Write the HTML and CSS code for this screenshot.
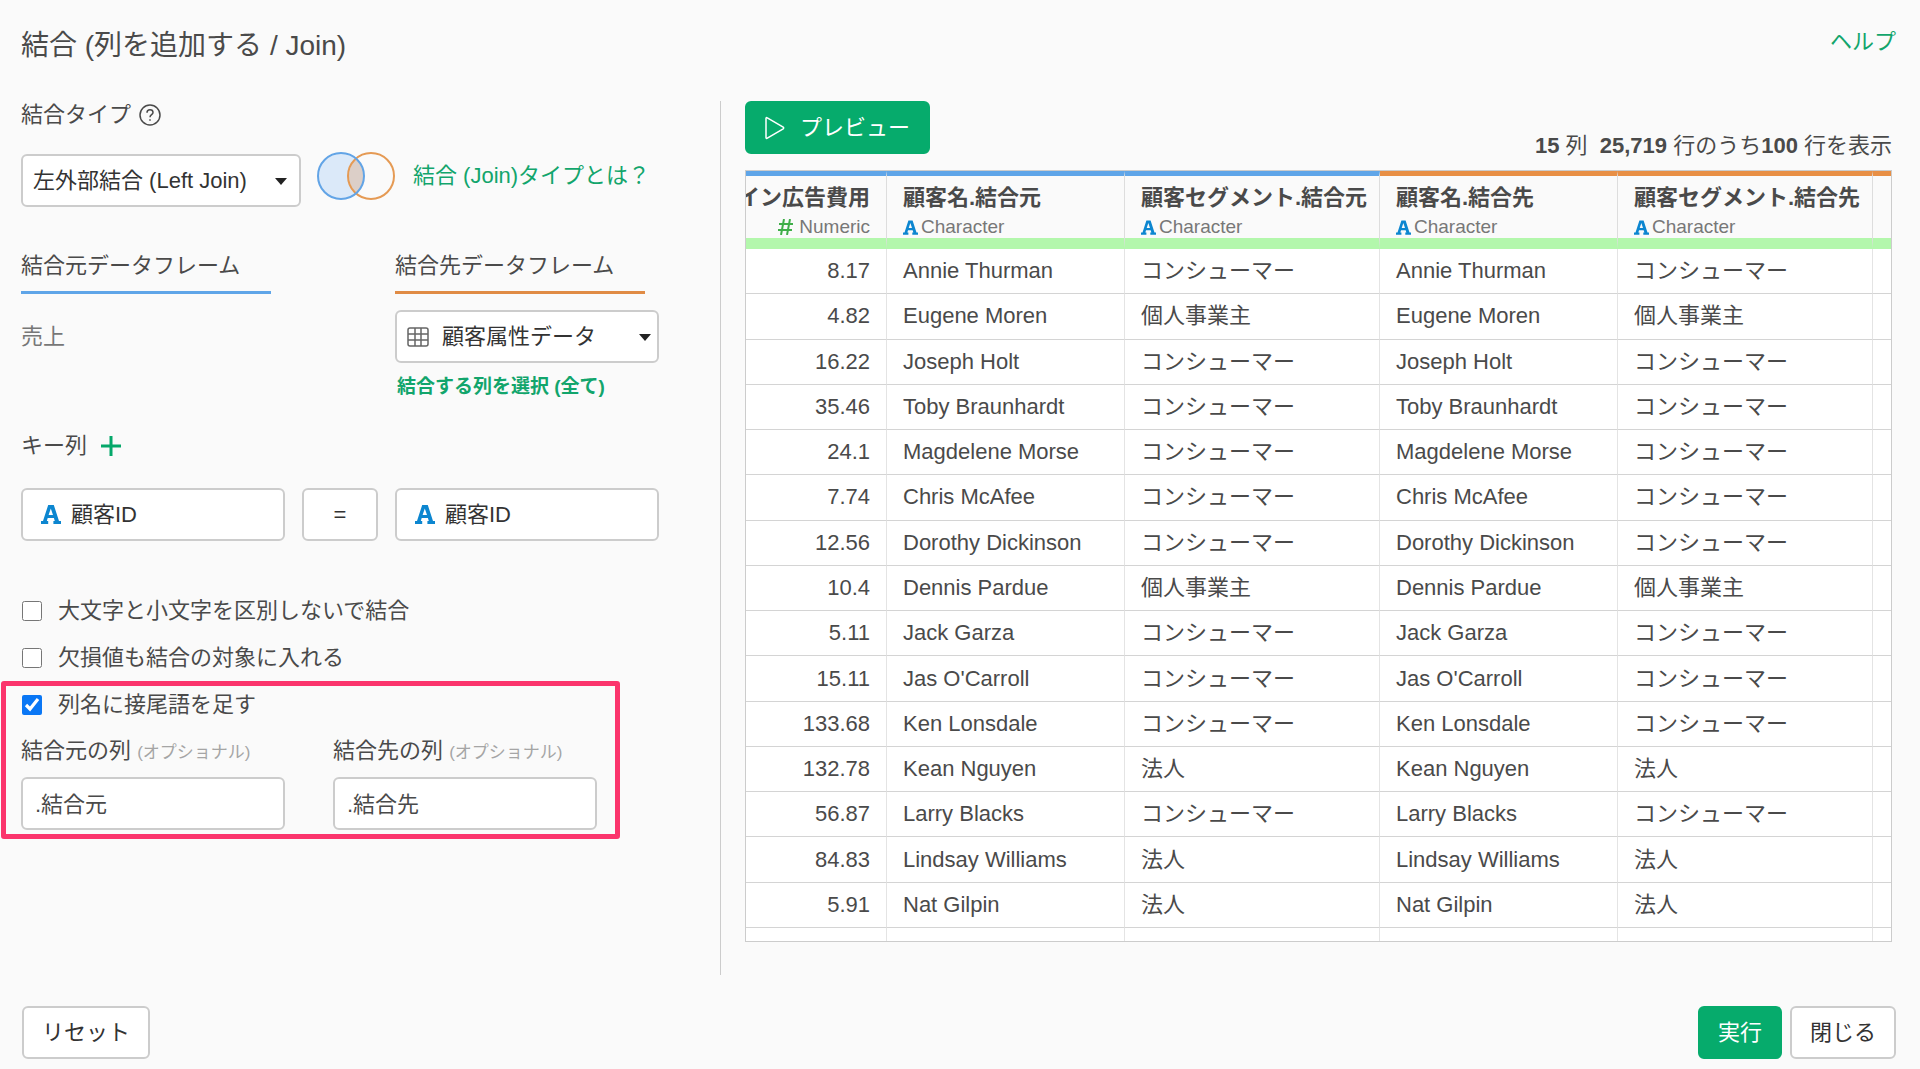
FILE: index.html
```
<!DOCTYPE html>
<html lang="ja">
<head>
    <meta charset="UTF-8">
    <meta name="viewport" content="width=device-width, initial-scale=1.0">
    <title>結合 (列を追加する / Join)</title>
    <link rel="stylesheet" href="styles.css">
</head>
<body>
    <!-- Shared icons -->
    <svg class="sprite" aria-hidden="true">
        <symbol id="icon-char" viewBox="0 0 20 19">
            <path fill-rule="evenodd" d="M7.200 0h5.600l5.200 16H20v3h-7.600v-3h1.400l-.9-3H6.700l-.9 3h1.400v3H0v-3h2zM9.800 3.600L7.600 10h4.400z"/>
        </symbol>
    </svg>

    <header class="header">
        <h1>結合 (列を追加する / Join)</h1>
        <a class="help-link" href="#">ヘルプ</a>
    </header>

    <main class="workspace">
        <!-- Join settings -->
        <form class="settings" id="joinForm">
            <div class="label-row">
                <label for="joinType">結合タイプ</label>
                <svg class="icon-help" viewBox="0 0 22 22" aria-hidden="true">
                    <circle cx="11" cy="11" r="10"/>
                    <path d="M8 8.700C8 6.700 9.300 5.700 11 5.700s3 1 3 2.700c0 2.200-3 2.400-3 4.800M11 15.200v1.600"/>
                </svg>
            </div>
            <div class="join-type">
                <div class="select join-select">
                    <select id="joinType">
                        <option>左外部結合 (Left Join)</option>
                    </select>
                </div>
                <div class="join-info">
                    <svg class="venn" viewBox="0 0 78 48" aria-hidden="true">
                        <circle cx="24" cy="24" r="23" fill="#dbe9f9"/>
                        <path d="M39.500 6.900a23 23 0 0 1 0 34.200a23 23 0 0 1 0-34.200z" fill="#dccfc8"/>
                        <circle cx="54" cy="24" r="23" fill="none" stroke="#e59a54" stroke-width="2"/>
                        <circle cx="24" cy="24" r="23" fill="none" stroke="#62a4e6" stroke-width="2"/>
                    </svg>
                    <a href="#">結合 (Join)タイプとは？</a>
                </div>
            </div>

            <div class="frames">
                <div class="frame-title source">結合元データフレーム</div>
                <label class="frame-title target" for="targetFrame">結合先データフレーム</label>
                <div class="source-name">売上</div>
                <div>
                    <div class="select frame-select">
                        <svg class="icon-table" viewBox="0 0 22 20" aria-hidden="true">
                            <rect x="1" y="1" width="20" height="18" rx="2"/>
                            <path d="M1 7h20M1 13h20M8 1v18M14 1v18"/>
                        </svg>
                        <select id="targetFrame">
                            <option>顧客属性データ</option>
                        </select>
                    </div>
                    <a class="column-link" href="#">結合する列を選択 (全て)</a>
                </div>
            </div>

            <div class="label-row key-label">
                <span>キー列</span>
                <button class="add-key" type="button" aria-label="キー列を追加">
                    <svg viewBox="0 0 20 20" aria-hidden="true"><path d="M10 0v20M0 10h20"/></svg>
                </button>
            </div>
            <div class="keys">
                <button class="key" type="button"><svg class="icon-char" aria-hidden="true"><use href="#icon-char"/></svg>顧客ID</button>
                <button class="key operator" type="button">=</button>
                <button class="key" type="button"><svg class="icon-char" aria-hidden="true"><use href="#icon-char"/></svg>顧客ID</button>
            </div>

            <div class="options">
                <label class="check"><input type="checkbox">大文字と小文字を区別しないで結合</label>
                <label class="check"><input type="checkbox">欠損値も結合の対象に入れる</label>
            </div>

            <div class="suffix-box">
                <label class="check"><input type="checkbox" checked>列名に接尾語を足す</label>
                <div class="suffixes">
                    <div class="suffix">
                        <label for="sourceSuffix">結合元の列 <small>(オプショナル)</small></label>
                        <input type="text" id="sourceSuffix" value=".結合元">
                    </div>
                    <div class="suffix">
                        <label for="targetSuffix">結合先の列 <small>(オプショナル)</small></label>
                        <input type="text" id="targetSuffix" value=".結合先">
                    </div>
                </div>
            </div>
        </form>

        <!-- Preview -->
        <section class="preview">
            <div class="toolbar">
                <button class="btn primary preview-btn" type="button">
                    <svg viewBox="0 0 20 24" aria-hidden="true"><path d="M1 2.500v19c0 .8.700 1.100 1.300.7l15.900-9.400c.6-.4.6-1.200 0-1.600L2.300 1.800C1.700 1.400 1 1.700 1 2.500z"/></svg>
                    プレビュー
                </button>
                <div class="stats"><b>15</b> 列 &nbsp;<b>25,719</b> 行のうち<b>100</b> 行を表示</div>
            </div>
            <div class="table-wrap">
                <table>
                    <colgroup>
                        <col class="col-number">
                        <col class="col-name">
                        <col class="col-segment">
                        <col class="col-name">
                        <col class="col-segment">
                        <col>
                    </colgroup>
                    <thead>
                        <tr>
                            <th class="num"><div class="name">イン広告費用</div><div class="type"><svg class="icon-num" viewBox="0 0 15 16" aria-hidden="true"><path d="M6 0L3 16M12 0L9 16M1 5h14M0 11h14"/></svg>Numeric</div></th>
                            <th><div class="name">顧客名.結合元</div><div class="type"><svg class="icon-char" aria-hidden="true"><use href="#icon-char"/></svg>Character</div></th>
                            <th><div class="name">顧客セグメント.結合元</div><div class="type"><svg class="icon-char" aria-hidden="true"><use href="#icon-char"/></svg>Character</div></th>
                            <th class="joined"><div class="name">顧客名.結合先</div><div class="type"><svg class="icon-char" aria-hidden="true"><use href="#icon-char"/></svg>Character</div></th>
                            <th class="joined"><div class="name">顧客セグメント.結合先</div><div class="type"><svg class="icon-char" aria-hidden="true"><use href="#icon-char"/></svg>Character</div></th>
                            <th class="joined"></th>
                        </tr>
                    </thead>
                    <tbody>
                        <tr><td class="num">8.17</td><td>Annie Thurman</td><td>コンシューマー</td><td>Annie Thurman</td><td>コンシューマー</td><td></td></tr>
                        <tr><td class="num">4.82</td><td>Eugene Moren</td><td>個人事業主</td><td>Eugene Moren</td><td>個人事業主</td><td></td></tr>
                        <tr><td class="num">16.22</td><td>Joseph Holt</td><td>コンシューマー</td><td>Joseph Holt</td><td>コンシューマー</td><td></td></tr>
                        <tr><td class="num">35.46</td><td>Toby Braunhardt</td><td>コンシューマー</td><td>Toby Braunhardt</td><td>コンシューマー</td><td></td></tr>
                        <tr><td class="num">24.1</td><td>Magdelene Morse</td><td>コンシューマー</td><td>Magdelene Morse</td><td>コンシューマー</td><td></td></tr>
                        <tr><td class="num">7.74</td><td>Chris McAfee</td><td>コンシューマー</td><td>Chris McAfee</td><td>コンシューマー</td><td></td></tr>
                        <tr><td class="num">12.56</td><td>Dorothy Dickinson</td><td>コンシューマー</td><td>Dorothy Dickinson</td><td>コンシューマー</td><td></td></tr>
                        <tr><td class="num">10.4</td><td>Dennis Pardue</td><td>個人事業主</td><td>Dennis Pardue</td><td>個人事業主</td><td></td></tr>
                        <tr><td class="num">5.11</td><td>Jack Garza</td><td>コンシューマー</td><td>Jack Garza</td><td>コンシューマー</td><td></td></tr>
                        <tr><td class="num">15.11</td><td>Jas O'Carroll</td><td>コンシューマー</td><td>Jas O'Carroll</td><td>コンシューマー</td><td></td></tr>
                        <tr><td class="num">133.68</td><td>Ken Lonsdale</td><td>コンシューマー</td><td>Ken Lonsdale</td><td>コンシューマー</td><td></td></tr>
                        <tr><td class="num">132.78</td><td>Kean Nguyen</td><td>法人</td><td>Kean Nguyen</td><td>法人</td><td></td></tr>
                        <tr><td class="num">56.87</td><td>Larry Blacks</td><td>コンシューマー</td><td>Larry Blacks</td><td>コンシューマー</td><td></td></tr>
                        <tr><td class="num">84.83</td><td>Lindsay Williams</td><td>法人</td><td>Lindsay Williams</td><td>法人</td><td></td></tr>
                        <tr><td class="num">5.91</td><td>Nat Gilpin</td><td>法人</td><td>Nat Gilpin</td><td>法人</td><td></td></tr>
                        <tr class="rest"><td></td><td></td><td></td><td></td><td></td><td></td></tr>
                    </tbody>
                </table>
            </div>
        </section>
    </main>

    <footer class="footer">
        <button class="btn" type="reset" form="joinForm">リセット</button>
        <div class="actions">
            <button class="btn primary" type="button">実行</button>
            <button class="btn" type="button">閉じる</button>
        </div>
    </footer>
</body>
</html>
```
FILE: styles.css
```
* {
    box-sizing: border-box;
}

body {
    margin: 0;
    min-height: 100vh;
    display: flex;
    flex-direction: column;
    background-color: #fafafa;
    color: #4a4a4a;
    font-family: "Liberation Sans", "Noto Sans CJK JP", sans-serif;
    font-size: 22px;
    line-height: 28px;
}

button, input, select {
    font: inherit;
    color: #333333;
}

a {
    color: #12a56c;
    text-decoration: none;
}

svg {
    display: block;
    flex: none;
}

.sprite {
    position: absolute;
    width: 0;
    height: 0;
}

/* Header */
.header {
    display: flex;
    justify-content: space-between;
    padding: 22px 24px 31px 21px;
}

h1 {
    margin: 0;
    font-size: 28px;
    font-weight: normal;
    line-height: 48px;
}

.help-link {
    line-height: 40px;
}

.workspace {
    flex: 1;
    display: flex;
}

/* Join settings */
.settings {
    width: 37.5%;
    min-width: 690px;
}

.label-row {
    display: flex;
    align-items: center;
    gap: 8px;
    padding-left: 21px;
}

.icon-help {
    width: 22px;
    height: 22px;
    fill: none;
    stroke: #4a4a4a;
    stroke-width: 1.5;
}

.join-type {
    display: flex;
    gap: 16px;
    margin: 25px 0 45px;
    padding-left: 21px;
}

.join-info {
    display: flex;
    align-items: center;
    gap: 18px;
    height: 44px;
}

.venn {
    width: 78px;
    height: 48px;
}

.select {
    position: relative;
}

.join-select {
    width: 280px;
}

.select::after {
    content: "";
    position: absolute;
    top: 24px;
    right: 14px;
    border: 6px solid transparent;
    border-top: 7px solid #222222;
    border-bottom: 0;
    pointer-events: none;
}

.frame-select::after {
    right: 8px;
}

select, .key, .suffix input, .btn {
    height: 53px;
    border: 2px solid #cccccc;
    border-radius: 6px;
    background-color: #ffffff;
}

select {
    appearance: none;
    width: 100%;
    padding: 0 30px 0 10px;
}

.frame-select select {
    padding-left: 45px;
}

.icon-table {
    position: absolute;
    top: 17px;
    left: 12px;
    width: 22px;
    height: 20px;
    fill: none;
    stroke: #666666;
    stroke-width: 1.5;
}

.frames {
    display: grid;
    grid-template-columns: 264px 264px;
    gap: 16px 110px;
    padding-left: 21px;
}

.frame-title {
    width: 250px;
    padding-bottom: 11px;
    border-bottom: 3px solid;
}

.source {
    border-color: #5fa5e8;
}

.target {
    border-color: #e08b45;
}

.source-name {
    color: #777777;
    line-height: 53px;
}

.column-link {
    display: block;
    margin: 10px 0 0 2px;
    font-size: 19px;
    font-weight: bold;
}

.key-label {
    gap: 14px;
    margin: 31px 0 28px;
}

.add-key {
    padding: 0;
    border: none;
    background: none;
}

.add-key svg {
    width: 20px;
    height: 20px;
    stroke: #05a86a;
    stroke-width: 3;
}

.keys {
    display: grid;
    grid-template-columns: 264px 76px 264px;
    gap: 17px;
    padding-left: 21px;
}

.key {
    display: flex;
    align-items: center;
    gap: 10px;
    padding: 0 18px;
}

.icon-char {
    width: 20px;
    height: 19px;
    fill: #0c86d0;
}

.operator {
    justify-content: center;
}

.options {
    margin-top: 56px;
    padding-left: 21px;
}

.check {
    display: flex;
    align-items: center;
    gap: 16px;
}

.options .check + .check {
    margin-top: 19px;
}

.check input {
    width: 20px;
    height: 20px;
    margin: 0 0 0 1px;
    accent-color: #0a77f5;
}

/* Suffix settings in a highlighted frame */
.suffix-box {
    width: 619px;
    margin: 9px 0 0 1px;
    padding: 5px 15px 4px;
    border: 5px solid #fb346c;
    border-radius: 3px;
}

.suffixes {
    display: flex;
    gap: 48px;
    margin-top: 18px;
}

.suffix {
    width: 264px;
}

.suffix label {
    display: block;
    margin-bottom: 10px;
}

.suffix small {
    font-size: 17px;
    color: #a5a5a5;
}

.suffix input {
    display: block;
    width: 100%;
    padding: 0 12px 4px;
    color: #4a4a4a;
}

/* Buttons */
.btn {
    padding: 0 18px;
}

.primary {
    border-color: #06ab6c;
    background-color: #06ab6c;
    color: #ffffff;
}

.preview-btn {
    display: flex;
    align-items: center;
    gap: 15px;
}

.preview-btn svg {
    width: 20px;
    height: 24px;
    fill: none;
    stroke: #ffffff;
    stroke-width: 1.5;
}

/* Preview */
.preview {
    flex: 1;
    min-width: 0;
    display: flex;
    flex-direction: column;
    padding: 0 28px 33px 24px;
    border-left: 1px solid #cccccc;
}

.toolbar {
    display: flex;
    justify-content: space-between;
    margin-bottom: 10px;
}

.stats {
    margin-top: 31px;
}

.table-wrap {
    flex: 1;
    display: grid;
    border: 1px solid #cccccc;
    background-color: #ffffff;
    overflow: hidden;
}

table {
    width: 100%;
    table-layout: fixed;
    border-collapse: separate;
    border-spacing: 0;
}

.col-number {
    width: 141px;
}

.col-name {
    width: 238px;
}

.col-segment {
    width: 255px;
}

th {
    height: 78px;
    padding: 8px 16px 0;
    border-top: 5px solid #5fa5e8;
    border-right: 1px solid #dddddd;
    border-bottom: 11px solid #b3f7ac;
    background-color: #fafafa;
    text-align: left;
    vertical-align: top;
    white-space: nowrap;
    overflow: hidden;
}

th.joined {
    border-top-color: #e88f45;
}

.name {
    display: flex;
}

.type {
    display: flex;
    align-items: center;
    gap: 3px;
    margin-top: 4px;
    color: #777777;
    font-size: 19px;
    font-weight: normal;
    line-height: 22px;
}

.type .icon-char {
    width: 15px;
    height: 15px;
}

.num .name, .num .type {
    justify-content: flex-end;
}

.icon-num {
    width: 15px;
    height: 16px;
    margin-right: 3px;
    fill: none;
    stroke: #3fae49;
    stroke-width: 2;
}

td {
    padding: 0 16px;
    border-right: 1px solid #e4e4e4;
    border-bottom: 1px solid #d4d4d4;
    white-space: nowrap;
}

td.num {
    text-align: right;
}

th:last-child, td:last-child {
    padding: 0;
    border-right: none;
}

.rest td {
    height: 13px;
    border-bottom: none;
}

/* Footer */
.footer {
    display: flex;
    justify-content: space-between;
    padding: 31px 24px 10px 22px;
}

.actions {
    display: flex;
    gap: 8px;
}
```
